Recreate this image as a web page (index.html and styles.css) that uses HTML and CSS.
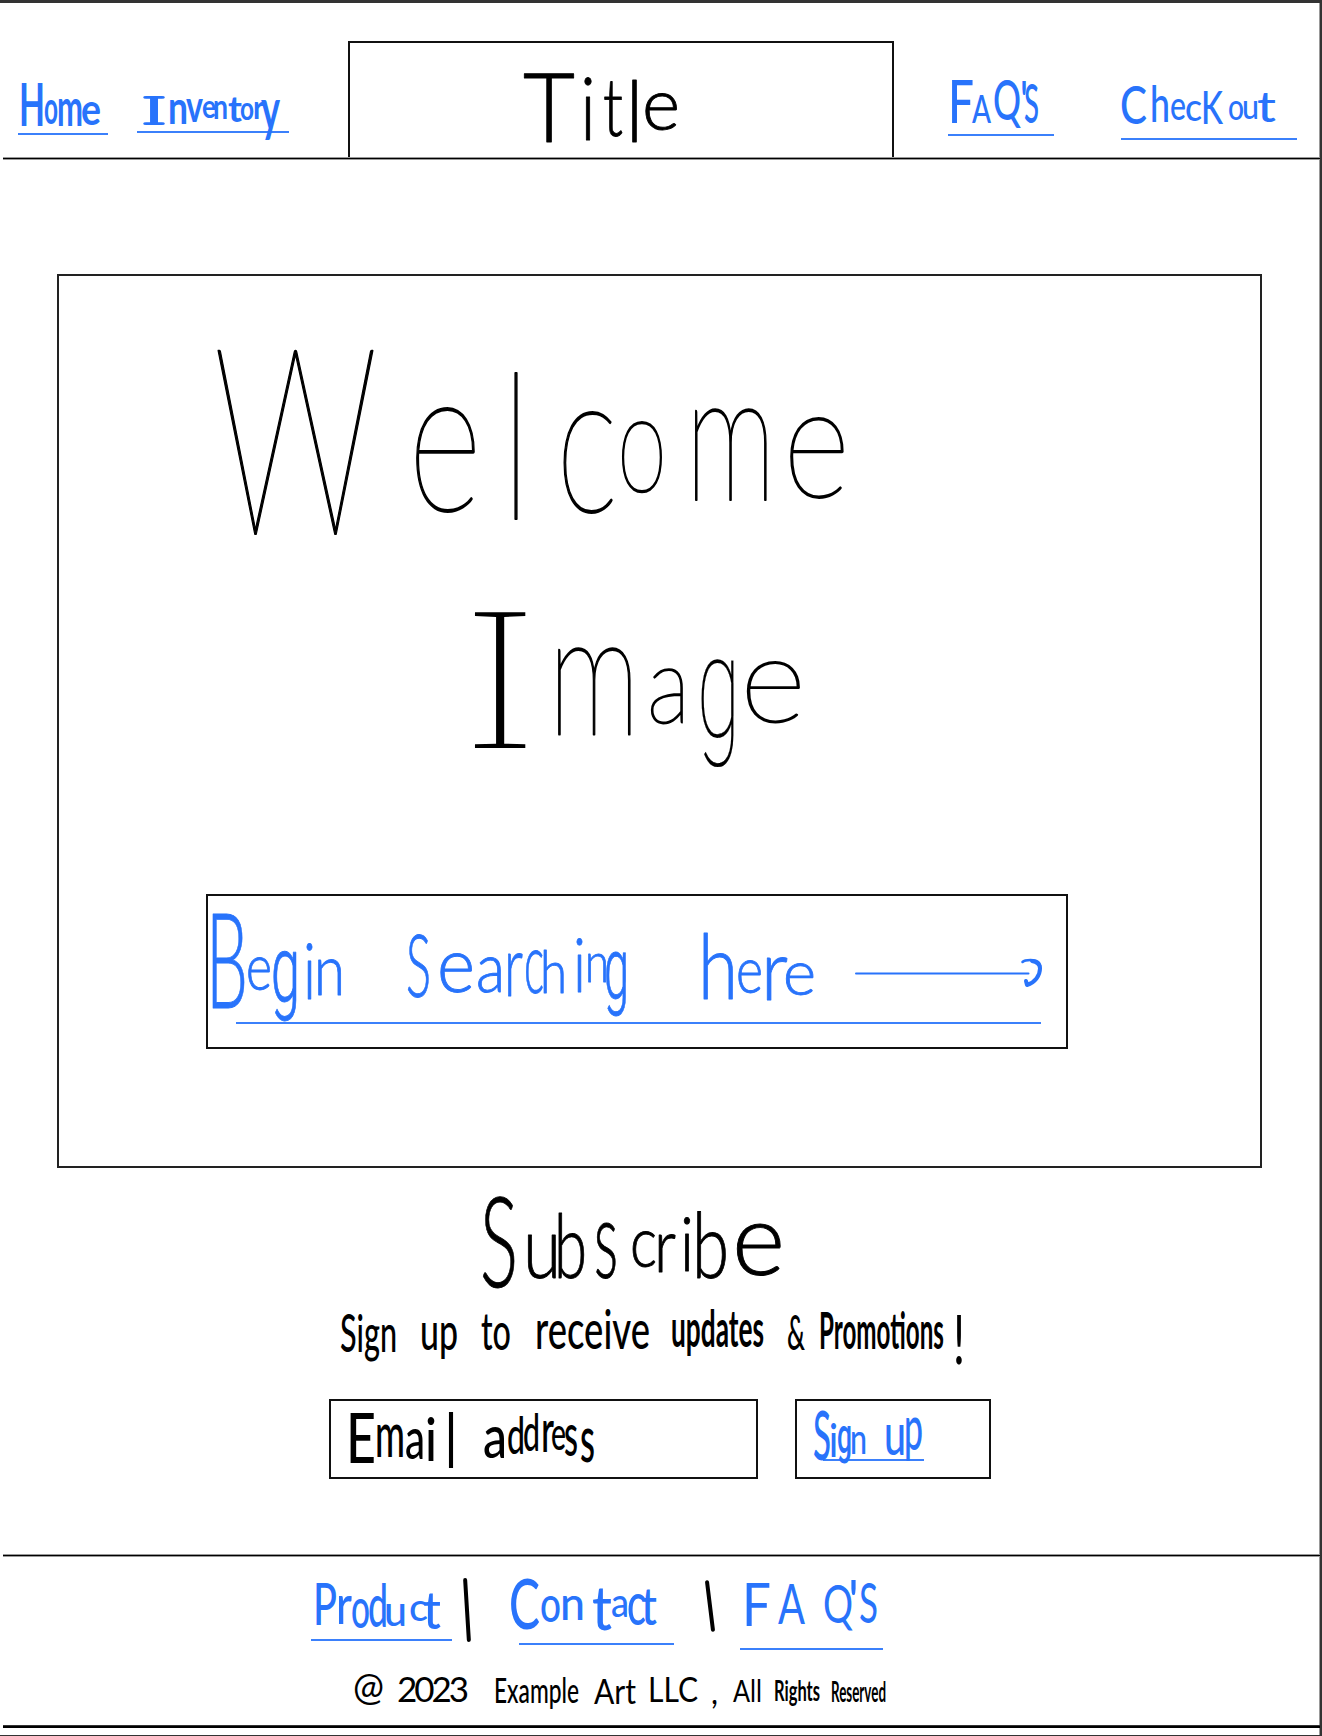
FILE: index.html
```html
<!DOCTYPE html>
<html lang="en">
<head>
<meta charset="utf-8">
<title>Title</title>
<link rel="stylesheet" href="styles.css">
</head>
<body>
<div class="page">
  <header class="header">
    <a class="link home"><svg class="ink" width="90" height="57" viewBox="18 76 90 57"><text class="bold" y="126" font-size="60"><tspan x="19" textLength="26" lengthAdjust="spacingAndGlyphs">H</tspan><tspan x="44" y="124" font-size="46" textLength="14" lengthAdjust="spacingAndGlyphs">o</tspan><tspan x="57" y="126" font-size="52" textLength="26" lengthAdjust="spacingAndGlyphs">m</tspan><tspan x="81" y="125" font-size="44" textLength="20" lengthAdjust="spacingAndGlyphs">e</tspan></text></svg></a>
    <a class="link inventory"><svg class="ink" width="152" height="57" viewBox="137 74 152 57"><text class="bold" y="124" font-size="37"><tspan class="slab small" x="140" textLength="28" lengthAdjust="spacingAndGlyphs">I</tspan><tspan x="168" font-size="45" textLength="20" lengthAdjust="spacingAndGlyphs">n</tspan><tspan x="186" y="122" font-size="43" textLength="17" lengthAdjust="spacingAndGlyphs">v</tspan><tspan x="202" y="118" font-size="33" textLength="14" lengthAdjust="spacingAndGlyphs">e</tspan><tspan x="213" y="119" font-size="35" textLength="15" lengthAdjust="spacingAndGlyphs">n</tspan><tspan x="228" y="122" font-size="37" textLength="14" lengthAdjust="spacingAndGlyphs">t</tspan><tspan x="240" y="120" font-size="32" textLength="14" lengthAdjust="spacingAndGlyphs">o</tspan><tspan x="253" y="119" font-size="33" textLength="11" lengthAdjust="spacingAndGlyphs">r</tspan><tspan x="261" y="130" font-size="58" textLength="19" lengthAdjust="spacingAndGlyphs">y</tspan></text></svg></a>
    <h1 class="title"><svg class="ink" width="180" height="90" viewBox="515 60 180 90"><text class="light" y="142" font-size="97"><tspan x="523" textLength="52" lengthAdjust="spacingAndGlyphs">T</tspan><tspan x="580" y="140" font-size="86" textLength="16" lengthAdjust="spacingAndGlyphs">i</tspan><tspan x="603" y="136" font-size="80" textLength="20" lengthAdjust="spacingAndGlyphs">t</tspan><tspan x="626" y="142" font-size="84" textLength="17" lengthAdjust="spacingAndGlyphs">l</tspan><tspan x="642" y="130" font-size="72" textLength="38" lengthAdjust="spacingAndGlyphs">e</tspan></text></svg></h1>
    <a class="link faq"><svg class="ink" width="106" height="57" viewBox="948 77 106 57"><text class="semi" y="123" font-size="59"><tspan x="948" textLength="26" lengthAdjust="spacingAndGlyphs">F</tspan><tspan x="972" font-size="38" textLength="19" lengthAdjust="spacingAndGlyphs">A</tspan><tspan x="993" y="120" font-size="55" textLength="28" lengthAdjust="spacingAndGlyphs">Q</tspan><tspan x="1020" y="120" font-size="54" textLength="8" lengthAdjust="spacingAndGlyphs">'</tspan><tspan x="1024" y="123" font-size="54" textLength="15" lengthAdjust="spacingAndGlyphs">S</tspan></text></svg></a>
    <a class="link checkout"><svg class="ink" width="176" height="57" viewBox="1121 81 176 57"><text class="semi" y="124" font-size="52"><tspan x="1120" textLength="27" lengthAdjust="spacingAndGlyphs">C</tspan><tspan x="1150" y="122" font-size="50" textLength="20" lengthAdjust="spacingAndGlyphs">h</tspan><tspan x="1170" y="120" font-size="41" textLength="16" lengthAdjust="spacingAndGlyphs">e</tspan><tspan x="1185" y="121" font-size="39" textLength="17" lengthAdjust="spacingAndGlyphs">c</tspan><tspan x="1201" y="124" font-size="46" textLength="22" lengthAdjust="spacingAndGlyphs">K</tspan><tspan x="1228" y="120" font-size="36" textLength="16" lengthAdjust="spacingAndGlyphs">o</tspan><tspan x="1242" y="119" font-size="34" textLength="17" lengthAdjust="spacingAndGlyphs">u</tspan><tspan x="1257" y="122" font-size="43" textLength="19" lengthAdjust="spacingAndGlyphs">t</tspan></text></svg></a>
  </header>

  <main>
    <section class="hero">
      <svg class="ink hero-text" width="660" height="440" viewBox="200 340 660 440">
        <text class="thin" y="534" font-size="262"><tspan x="213" textLength="165" lengthAdjust="spacingAndGlyphs">W</tspan><tspan x="408" y="511" font-size="207" textLength="74" lengthAdjust="spacingAndGlyphs">e</tspan><tspan x="500" y="519" font-size="202" textLength="32" lengthAdjust="spacingAndGlyphs">l</tspan><tspan x="556" y="512" font-size="200" textLength="62" lengthAdjust="spacingAndGlyphs">c</tspan><tspan x="617" y="491" font-size="140" textLength="50" lengthAdjust="spacingAndGlyphs">o</tspan><tspan x="685" y="500" font-size="183" textLength="91" lengthAdjust="spacingAndGlyphs">m</tspan><tspan x="783" y="497" font-size="158" textLength="67" lengthAdjust="spacingAndGlyphs">e</tspan></text>
        <text class="thin" y="748" font-size="190"><tspan class="slab" x="456" textLength="88" lengthAdjust="spacingAndGlyphs">I</tspan><tspan x="548" y="734" font-size="172" textLength="92" lengthAdjust="spacingAndGlyphs">m</tspan><tspan x="647" y="723" font-size="108" textLength="43" lengthAdjust="spacingAndGlyphs">a</tspan><tspan class="round fine" x="697" y="737" font-size="142" textLength="43" lengthAdjust="spacingAndGlyphs">g</tspan><tspan x="740" y="722" font-size="120" textLength="66" lengthAdjust="spacingAndGlyphs">e</tspan></text>
      </svg>
      <a class="search">
        <svg class="ink search-text" width="805" height="126" viewBox="236 896 805 126">
          <text class="light" y="1008" font-size="133"><tspan x="206" textLength="42" lengthAdjust="spacingAndGlyphs">B</tspan><tspan x="246" y="990" font-size="66" textLength="26" lengthAdjust="spacingAndGlyphs">e</tspan><tspan class="round" x="271" y="1001" font-size="92" textLength="29" lengthAdjust="spacingAndGlyphs">g</tspan><tspan x="303" y="999" font-size="76" textLength="13" lengthAdjust="spacingAndGlyphs">i</tspan><tspan x="314" y="995" font-size="70" textLength="31" lengthAdjust="spacingAndGlyphs">n</tspan>
          <tspan x="406" y="997" font-size="86" textLength="25" lengthAdjust="spacingAndGlyphs">S</tspan><tspan x="437" y="992" font-size="76" textLength="38" lengthAdjust="spacingAndGlyphs">e</tspan><tspan x="476" y="992" font-size="68" textLength="29" lengthAdjust="spacingAndGlyphs">a</tspan><tspan x="504" y="996" font-size="84" textLength="19" lengthAdjust="spacingAndGlyphs">r</tspan><tspan x="524" y="993" font-size="84" textLength="20" lengthAdjust="spacingAndGlyphs">c</tspan><tspan x="540" y="993" font-size="60" textLength="27" lengthAdjust="spacingAndGlyphs">h</tspan><tspan x="573" y="992" font-size="74" textLength="13" lengthAdjust="spacingAndGlyphs">i</tspan><tspan x="585" y="982" font-size="56" textLength="24" lengthAdjust="spacingAndGlyphs">n</tspan><tspan class="round" x="604" y="998" font-size="86" textLength="25" lengthAdjust="spacingAndGlyphs">g</tspan>
          <tspan x="698" y="999" font-size="90" textLength="40" lengthAdjust="spacingAndGlyphs">h</tspan><tspan x="736" y="993" font-size="66" textLength="27" lengthAdjust="spacingAndGlyphs">e</tspan><tspan x="761" y="1000" font-size="84" textLength="27" lengthAdjust="spacingAndGlyphs">r</tspan><tspan x="783" y="995" font-size="64" textLength="33" lengthAdjust="spacingAndGlyphs">e</tspan></text>
          <g class="arrow"><path stroke-width="2" d="M856 973.5H1028.500"/><path stroke-width="2.500" d="M1022.500 962c2-2 5-2 8-2c6 0 10 2 10 8"/><path stroke-width="4" d="M1032 961c5 1 8 3 8 7.500c0 7-5 14-13 16.500l-1-4"/></g>
        </svg>
      </a>
    </section>

    <section class="subscribe">
      <svg class="ink" width="330" height="112" viewBox="470 1185 330 112"><text class="light" y="1287" font-size="126"><tspan x="480" textLength="38" lengthAdjust="spacingAndGlyphs">S</tspan><tspan x="523" y="1278" font-size="86" textLength="38" lengthAdjust="spacingAndGlyphs">u</tspan><tspan x="554" y="1278" font-size="88" textLength="33" lengthAdjust="spacingAndGlyphs">b</tspan><tspan x="594" y="1278" font-size="108" textLength="24" lengthAdjust="spacingAndGlyphs">s</tspan><tspan x="630" y="1267" font-size="70" textLength="27" lengthAdjust="spacingAndGlyphs">c</tspan><tspan x="654" y="1272" font-size="74" textLength="22" lengthAdjust="spacingAndGlyphs">r</tspan><tspan x="680" y="1271" font-size="74" textLength="14" lengthAdjust="spacingAndGlyphs">i</tspan><tspan x="692" y="1278" font-size="90" textLength="37" lengthAdjust="spacingAndGlyphs">b</tspan><tspan x="732" y="1275" font-size="100" textLength="53" lengthAdjust="spacingAndGlyphs">e</tspan></text></svg>
      <svg class="ink" width="640" height="76" viewBox="335 1301 640 76"><text class="semi" y="1352" font-size="52"><tspan x="340" textLength="57" lengthAdjust="spacingAndGlyphs">Sign</tspan> <tspan x="420" y="1350" textLength="38" lengthAdjust="spacingAndGlyphs">up</tspan> <tspan x="481" y="1350" textLength="30" lengthAdjust="spacingAndGlyphs">to</tspan> <tspan x="535" y="1349" font-size="54" textLength="115" lengthAdjust="spacingAndGlyphs">receive</tspan> <tspan class="bold" x="671" y="1347" textLength="93" lengthAdjust="spacingAndGlyphs">updates</tspan> <tspan x="787" y="1350" font-size="48" textLength="18" lengthAdjust="spacingAndGlyphs">&amp;</tspan> <tspan class="bold" x="819" y="1349" textLength="125" lengthAdjust="spacingAndGlyphs">Promotions</tspan><tspan class="normal" x="953" y="1364" font-size="68" textLength="12" lengthAdjust="spacingAndGlyphs">!</tspan></text></svg>
      <div class="form">
        <div class="field"><svg class="ink" width="260" height="68" viewBox="345 1405 260 68"><text class="semi" y="1463" font-size="69"><tspan x="346" textLength="30" lengthAdjust="spacingAndGlyphs">E</tspan><tspan x="375" y="1457" font-size="62" textLength="30" lengthAdjust="spacingAndGlyphs">m</tspan><tspan x="405" y="1459" font-size="58" textLength="20" lengthAdjust="spacingAndGlyphs">a</tspan><tspan x="425" y="1461" font-size="60" textLength="12" lengthAdjust="spacingAndGlyphs">i</tspan><tspan x="446" y="1468" font-size="76" textLength="10" lengthAdjust="spacingAndGlyphs">l</tspan> <tspan x="483" y="1458" font-size="60" textLength="24" lengthAdjust="spacingAndGlyphs">a</tspan><tspan x="507" y="1454" font-size="53" textLength="18" lengthAdjust="spacingAndGlyphs">d</tspan><tspan x="523" y="1451" font-size="53" textLength="17" lengthAdjust="spacingAndGlyphs">d</tspan><tspan x="541" y="1452" font-size="60" textLength="13" lengthAdjust="spacingAndGlyphs">r</tspan><tspan x="551" y="1450" font-size="46" textLength="15" lengthAdjust="spacingAndGlyphs">e</tspan><tspan x="564" y="1456" font-size="60" textLength="14" lengthAdjust="spacingAndGlyphs">s</tspan><tspan x="580" y="1462" font-size="66" textLength="15" lengthAdjust="spacingAndGlyphs">s</tspan></text></svg></div>
        <a class="signup"><svg class="ink" width="112" height="54" viewBox="812 1405 112 54"><text class="semi" y="1460" font-size="68"><tspan x="813" textLength="18" lengthAdjust="spacingAndGlyphs">S</tspan><tspan x="829" y="1457" font-size="46" textLength="9" lengthAdjust="spacingAndGlyphs">i</tspan><tspan class="round" x="837" y="1453" font-size="50" textLength="15" lengthAdjust="spacingAndGlyphs">g</tspan><tspan x="850" y="1454" font-size="42" textLength="17" lengthAdjust="spacingAndGlyphs">n</tspan> <tspan x="884" y="1455" font-size="58" textLength="22" lengthAdjust="spacingAndGlyphs">u</tspan><tspan x="904" y="1450" font-size="64" textLength="19" lengthAdjust="spacingAndGlyphs">p</tspan></text></svg></a>
      </div>
    </section>
  </main>

  <footer class="footer">
    <nav class="footer-links">
      <a class="link product"><svg class="ink" width="141" height="68" viewBox="311 1571 141 68"><text class="semi" y="1625" font-size="57"><tspan x="313" textLength="24" lengthAdjust="spacingAndGlyphs">P</tspan><tspan x="336" y="1624" font-size="54" textLength="16" lengthAdjust="spacingAndGlyphs">r</tspan><tspan x="351" y="1628" font-size="56" textLength="19" lengthAdjust="spacingAndGlyphs">o</tspan><tspan x="368" y="1627" font-size="59" textLength="20" lengthAdjust="spacingAndGlyphs">d</tspan><tspan x="384" y="1626" font-size="43" textLength="23" lengthAdjust="spacingAndGlyphs">u</tspan><tspan x="409" y="1621" font-size="39" textLength="19" lengthAdjust="spacingAndGlyphs">c</tspan><tspan x="423" y="1629" font-size="52" textLength="18" lengthAdjust="spacingAndGlyphs">t</tspan></text></svg></a>
      <span class="bar first"></span>
      <a class="link contact"><svg class="ink" width="155" height="68" viewBox="519 1575 155 68"><text class="semi" y="1629" font-size="70"><tspan x="509" textLength="31" lengthAdjust="spacingAndGlyphs">C</tspan><tspan x="540" y="1622" font-size="50" textLength="21" lengthAdjust="spacingAndGlyphs">o</tspan><tspan x="560" y="1620" font-size="46" textLength="25" lengthAdjust="spacingAndGlyphs">n</tspan><tspan x="592" y="1630" font-size="62" textLength="20" lengthAdjust="spacingAndGlyphs">t</tspan><tspan x="611" y="1617" font-size="41" textLength="18" lengthAdjust="spacingAndGlyphs">a</tspan><tspan x="627" y="1625" font-size="60" textLength="19" lengthAdjust="spacingAndGlyphs">c</tspan><tspan x="641" y="1625" font-size="52" textLength="16" lengthAdjust="spacingAndGlyphs">t</tspan></text></svg></a>
      <span class="bar second"></span>
      <a class="link footer-faq"><svg class="ink" width="143" height="68" viewBox="740 1580 143 68"><text class="normal" y="1626" font-size="60"><tspan x="742" textLength="29" lengthAdjust="spacingAndGlyphs">F</tspan><tspan x="778" y="1624" font-size="56" textLength="27" lengthAdjust="spacingAndGlyphs">A</tspan><tspan x="823" y="1623" font-size="53" textLength="30" lengthAdjust="spacingAndGlyphs">Q</tspan><tspan x="848" y="1622" font-size="58" textLength="11" lengthAdjust="spacingAndGlyphs">'</tspan><tspan x="859" y="1623" font-size="57" textLength="19" lengthAdjust="spacingAndGlyphs">S</tspan></text></svg></a>
    </nav>
    <svg class="ink copyright" width="544" height="42" viewBox="350 1670 544 42"><text class="normal" y="1701" font-size="35"><tspan x="353" y="1700" font-size="38" textLength="31" lengthAdjust="spacingAndGlyphs">@</tspan> <tspan x="397" y="1702" textLength="72" lengthAdjust="spacing">2023</tspan> <tspan class="semi" x="494" y="1703" textLength="85" lengthAdjust="spacingAndGlyphs">Example</tspan> <tspan x="594" y="1704" textLength="42" lengthAdjust="spacingAndGlyphs">Art</tspan> <tspan x="648" y="1702" textLength="50" lengthAdjust="spacingAndGlyphs">LLC</tspan> <tspan x="711" y="1704" textLength="7" lengthAdjust="spacingAndGlyphs">,</tspan> <tspan x="733" y="1702" font-size="31" textLength="29" lengthAdjust="spacingAndGlyphs">All</tspan> <tspan class="bold" x="774" y="1701" font-size="28" textLength="46" lengthAdjust="spacingAndGlyphs">Rights</tspan> <tspan class="bold" x="831" y="1702" font-size="29" textLength="55" lengthAdjust="spacingAndGlyphs">Reserved</tspan></text></svg>
  </footer>
</div>
</body>
</html>
```
FILE: styles.css
```css
* { box-sizing: border-box; }

body {
  margin: 0;
  background: #fff;
  color: #000;
  font-family: Lato, "Open Sans", sans-serif;
}

.page {
  display: flow-root;
  width: 1322px;
  height: 1736px;
  overflow: hidden;
  border-top: 3px solid #333;
  border-right: 2px solid #333;
  border-bottom: 1px solid #333;
  box-shadow: inset -1px 0 #999;
}

.ink { display: block; flex: none; overflow: visible; }
.ink text { fill: currentColor; font-family: Lato, "Open Sans", sans-serif; font-weight: 400; stroke-linejoin: round; }
.ink .thin { font-weight: 100; stroke: currentColor; stroke-width: 1.8; }
.ink .light { font-weight: 300; stroke: currentColor; stroke-width: 0.9; }
.ink .normal { font-weight: 400; }
.ink .semi { font-weight: 500; }
.ink .bold { font-weight: 700; }
.ink .slab { font-family: "Noto Sans", sans-serif; font-weight: 100; stroke-width: 0; }
.ink .slab.small { stroke: currentColor; stroke-width: 2; }
.ink .round { font-family: Roboto, sans-serif; }
.ink .fine { stroke-width: 0.2; }

.header {
  display: flex;
  align-items: flex-end;
  height: 157px;
  margin-left: 3px;
  border-bottom: 3px solid #000;
  border-image: linear-gradient(to top, #999 1px, #000 1px 2px, #999 2px) 3;
  border-width: 0 0 3px;
}

.link { flex: none; color: #2873fb; border-bottom: 2px solid #3b80fb; }
.home { margin: 0 0 22px 15px; }
.inventory { margin: 0 0 24px 29px; }
.faq { margin: 0 0 21px 54px; }
.checkout { margin: 0 0 17px 67px; }

.title {
  flex: none;
  width: 546px;
  height: 116px;
  margin: 0 0 0 59px;
  padding: 17px 0 0 165px;
  border: 2px solid #111;
  border-bottom: 0;
}

.hero {
  display: flow-root;
  width: 1205px;
  height: 894px;
  margin: 114px 0 0 57px;
  border: 2px solid #222;
}
.hero-text { margin: 64px 0 0 141px; }

.search {
  display: block;
  width: 862px;
  height: 155px;
  margin: 114px 0 0 147px;
  padding-left: 28px;
  border: 2px solid #111;
  color: #2873fb;
}
.search-text { box-sizing: content-box; border-bottom: 2px solid #3b80fb; }
.arrow { fill: none; stroke: #2873fb; stroke-linecap: round; stroke-linejoin: round; }

.subscribe > .ink:first-child { margin: 17px 0 0 470px; }
.subscribe > .ink + .ink { margin: 4px 0 0 335px; }

.form { display: flex; gap: 37px; margin: 22px 0 0 329px; }
.field, .signup { height: 80px; border: 2px solid #111; }
.field { width: 429px; padding: 4px 0 0 14px; }
.signup { width: 196px; padding: 4px 0 0 15px; color: #2873fb; }
.signup .ink {
  box-sizing: content-box;
  border-bottom: 2px solid #3b80fb;
  border-image: linear-gradient(90deg, transparent 13px, #3b80fb 13px) 2;
  border-width: 0 0 2px;
}

.footer {
  height: 174px;
  margin: 75px 0 0 3px;
  border: solid #000;
  border-image: linear-gradient(#999 1px, #000 1px 2px, #999 2px 3px, transparent 3px 171px, #333 171px 172px, #000 172px) 3;
  border-width: 3px 0;
}
.footer-links { display: flex; align-items: flex-start; height: 113px; }
.product { margin: 14px 0 0 308px; }
.contact { margin: 18px 0 0 48px; }
.footer-faq { margin: 23px 0 0 26px; }
.bar { flex: none; width: 4px; background: #000; border-radius: 2px; }
.bar.first { height: 64px; margin: 21px 2px 0 13px; transform: rotate(-3.5deg); }
.bar.second { height: 52px; margin: 23px 2px 0 34px; transform: rotate(-7deg); }
.copyright { margin-left: 347px; }
```
